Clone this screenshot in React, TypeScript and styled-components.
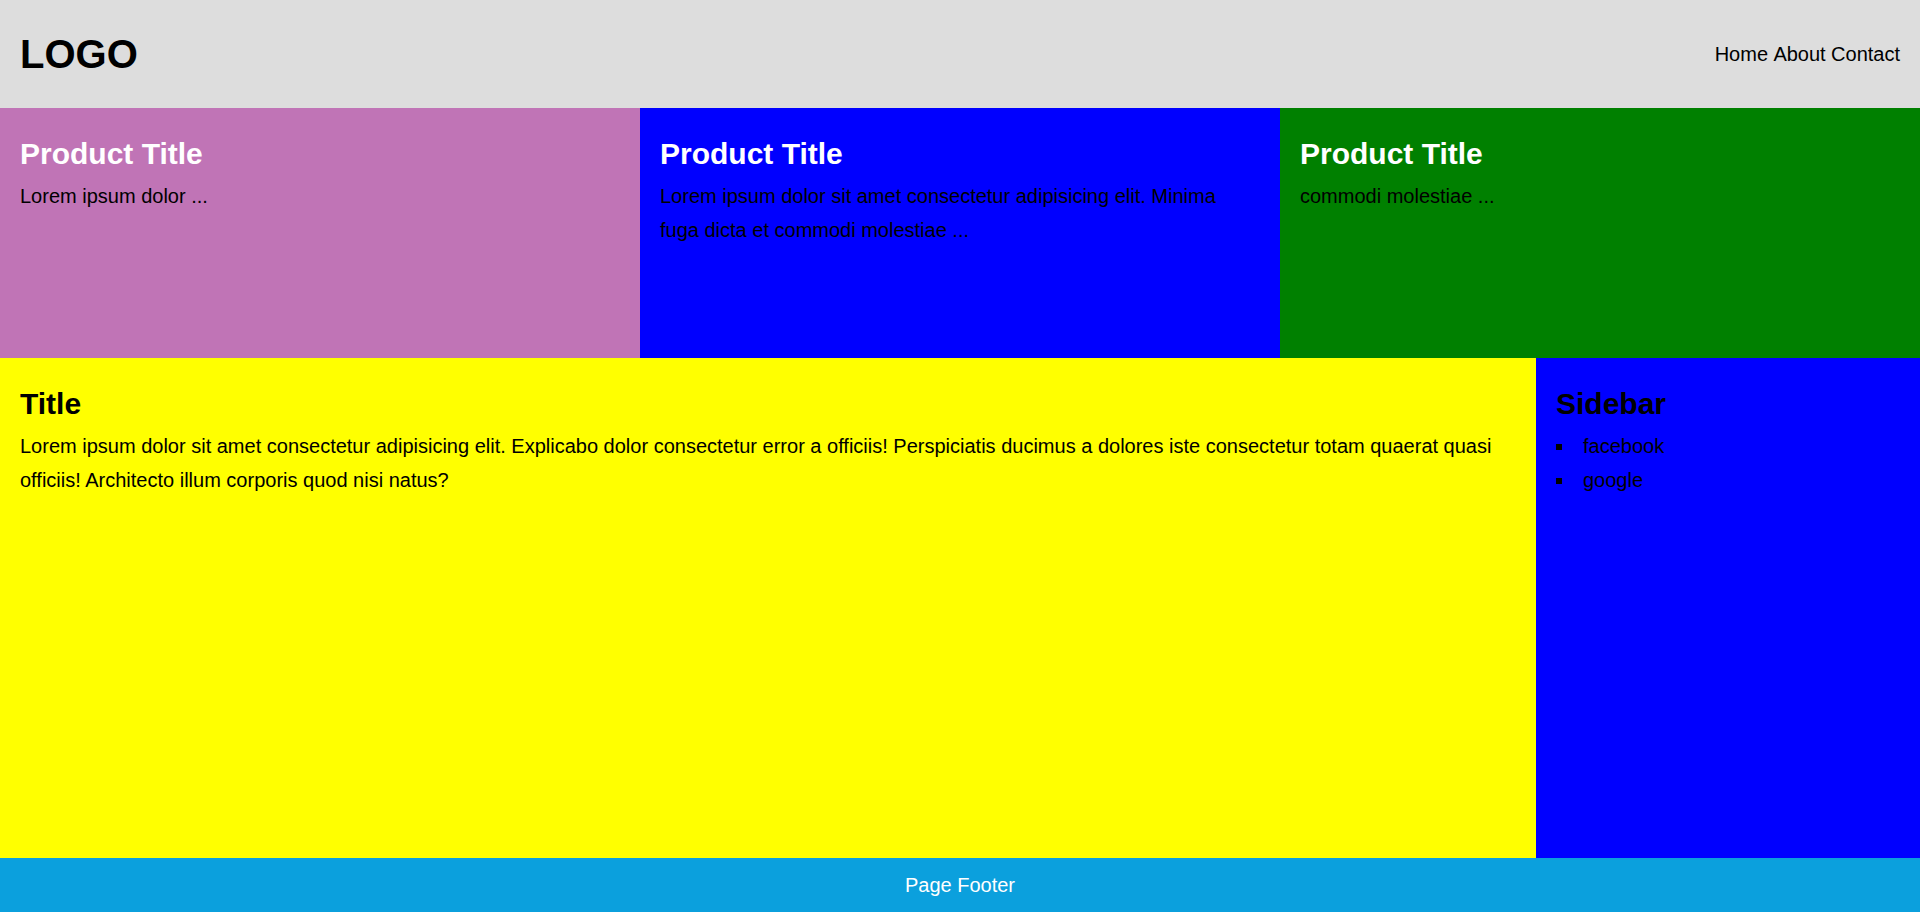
import React from "react";
import styled, { createGlobalStyle } from "styled-components";

const GlobalStyle = createGlobalStyle`
  * { box-sizing: border-box; }
  html, body { margin: 0; padding: 0; }
  body {
    font-family: "Liberation Sans", Arial, sans-serif;
    font-size: 20px;
    line-height: 1.7;
    color: #000;
  }
`;

const Page = styled.div`
  display: grid;
  grid-template-columns: 4fr 1fr;
  grid-template-rows: auto 250px 1fr auto;
  min-height: 100vh;
`;

const Header = styled.header`
  grid-column: 1 / -1;
  display: flex;
  align-items: center;
  justify-content: space-between;
  padding: 20px;
  background: #dddddd;
`;

const Logo = styled.h1`
  margin: 0;
  font-size: 40px;
  font-weight: bold;
`;

const Nav = styled.nav`
  display: flex;
  gap: 0.27em;
`;

const NavLink = styled.a`
  color: #000;
  text-decoration: none;
`;

const Products = styled.section`
  grid-column: 1 / -1;
  display: grid;
  grid-template-columns: repeat(3, 1fr);
`;

const Product = styled.article<{ $bg: string }>`
  background: ${(p) => p.$bg};
  padding: 20px;
`;

const Heading = styled.h2<{ $light?: boolean }>`
  margin: 0;
  font-size: 30px;
  font-weight: bold;
  color: ${(p) => (p.$light ? "#fff" : "#000")};
`;

const Text = styled.p`
  margin: 0;
`;

const Main = styled.main`
  background: #ffff00;
  padding: 20px;
`;

const Sidebar = styled.aside`
  background: #0000ff;
  padding: 20px;
`;

const List = styled.ul`
  margin: 0;
  padding: 0;
  list-style: square inside;
`;

const Footer = styled.footer`
  grid-column: 1 / -1;
  background: #0ba0dd;
  color: #fff;
  text-align: center;
  padding: 10px;
`;

const products = [
  { bg: "#c074b6", text: "Lorem ipsum dolor ..." },
  {
    bg: "#0000ff",
    text: "Lorem ipsum dolor sit amet consectetur adipisicing elit. Minima fuga dicta et commodi molestiae ...",
  },
  { bg: "#008000", text: "commodi molestiae ..." },
];

export default function App() {
  return (
    <>
      <GlobalStyle />
      <Page>
        <Header>
          <Logo>LOGO</Logo>
          <Nav>
            <NavLink href="#">Home</NavLink>
            <NavLink href="#">About</NavLink>
            <NavLink href="#">Contact</NavLink>
          </Nav>
        </Header>
        <Products>
          {products.map((p, i) => (
            <Product key={i} $bg={p.bg}>
              <Heading $light>Product Title</Heading>
              <Text>{p.text}</Text>
            </Product>
          ))}
        </Products>
        <Main>
          <Heading>Title</Heading>
          <Text>
            Lorem ipsum dolor sit amet consectetur adipisicing elit. Explicabo dolor consectetur error a officiis!
            Perspiciatis ducimus a dolores iste consectetur totam quaerat quasi officiis! Architecto illum corporis
            quod nisi natus?
          </Text>
        </Main>
        <Sidebar>
          <Heading>Sidebar</Heading>
          <List>
            <li>facebook</li>
            <li>google</li>
          </List>
        </Sidebar>
        <Footer>Page Footer</Footer>
      </Page>
    </>
  );
}
